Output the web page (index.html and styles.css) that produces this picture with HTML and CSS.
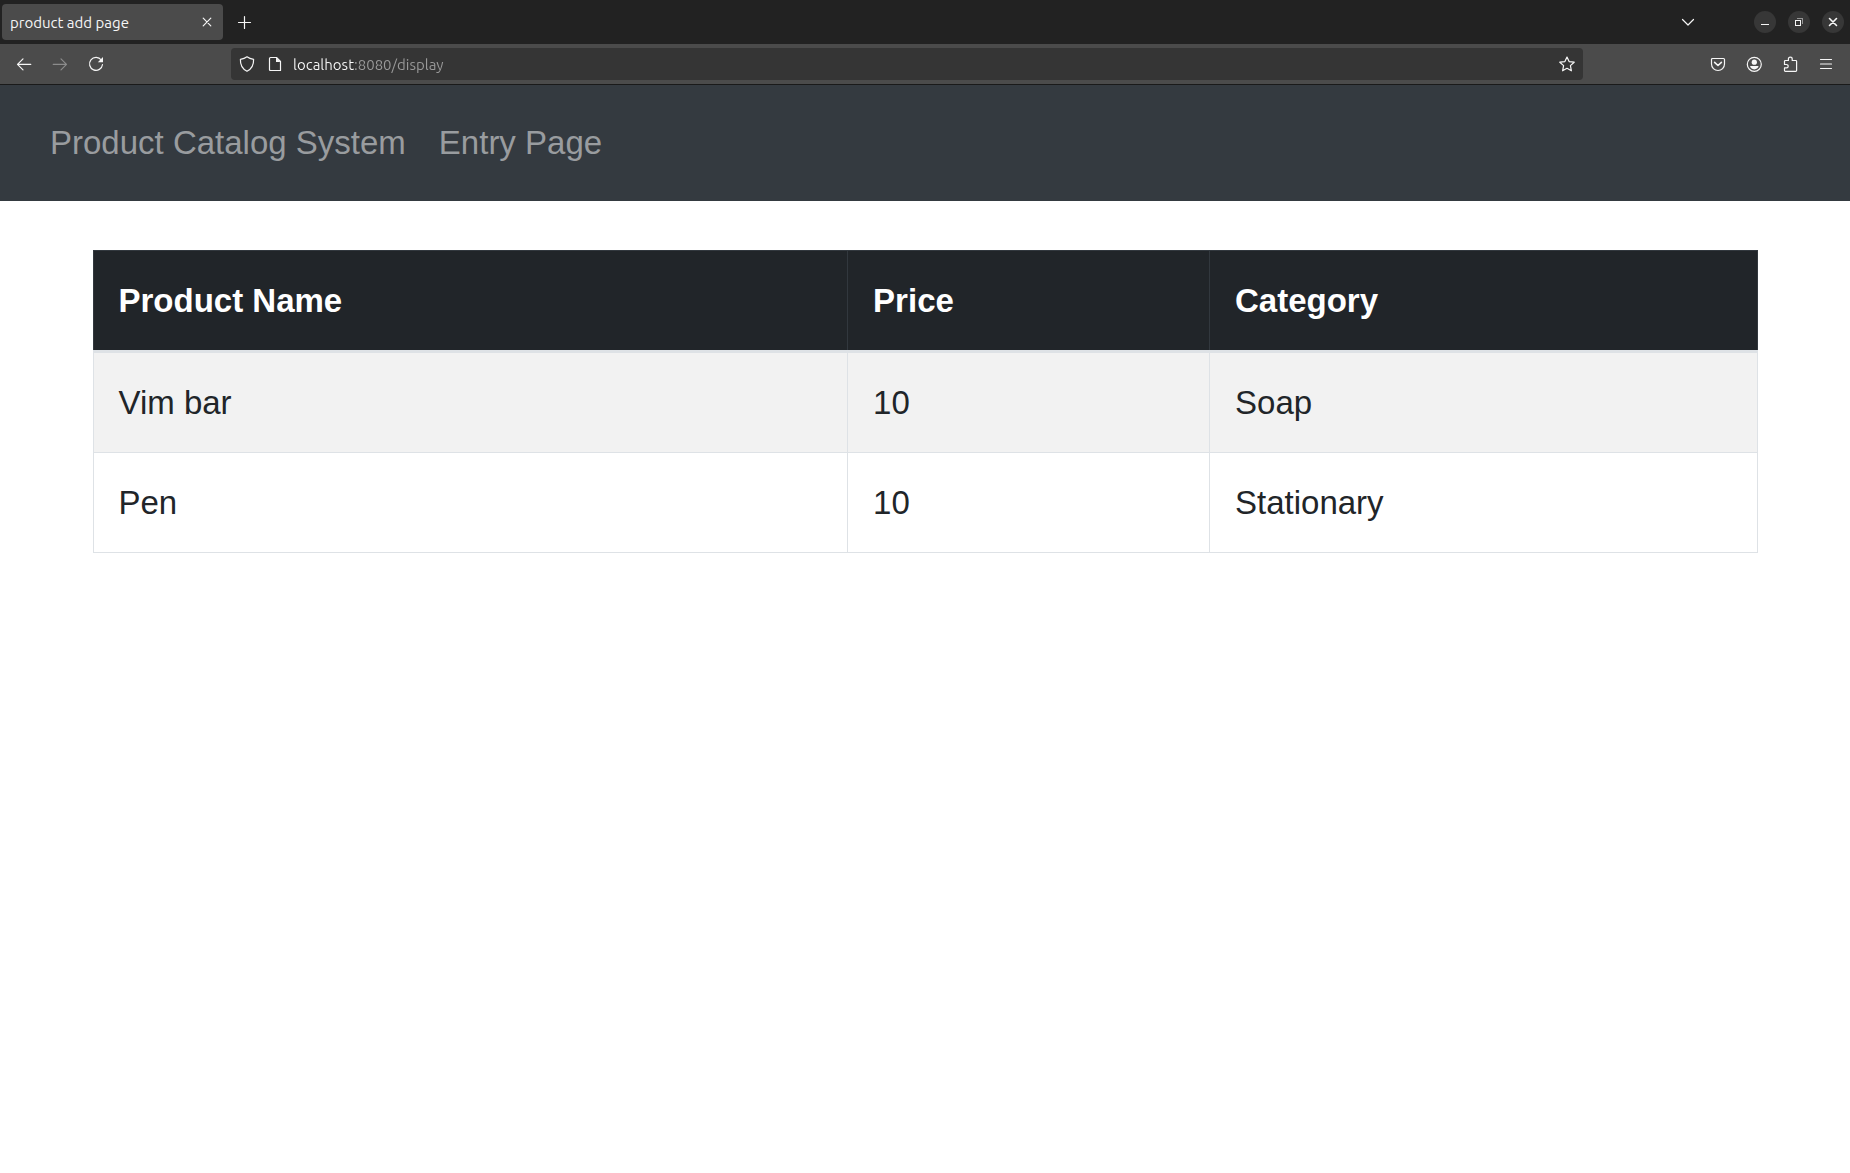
FILE: index.html
```html
<!DOCTYPE html>
<html lang="en">
<head>
<meta charset="utf-8">
<title>product add page</title>
<link rel="stylesheet" href="styles.css">
</head>
<body>
<header class="browser">
  <div class="tabstrip">
    <div class="tab">
      <span class="tab-title">product add page</span>
      <button class="tab-close" type="button" aria-label="Close tab">
        <svg class="icon" viewBox="0 0 16 16"><path d="M4.200 4.200l7.600 7.600M11.800 4.200l-7.600 7.600"/></svg>
      </button>
    </div>
    <button class="tool new-tab" type="button" aria-label="New tab">
      <svg class="icon" viewBox="0 0 16 16"><path d="M8.500 2.500v12M2.500 8.500h12"/></svg>
    </button>
    <button class="tool list-tabs" type="button" aria-label="List all tabs">
      <svg class="icon" viewBox="0 0 16 16"><path d="M2.500 5.500L8 11l5.500-5.500"/></svg>
    </button>
    <div class="window-controls">
      <button class="window-button" type="button" aria-label="Minimize">
        <svg class="icon" viewBox="0 0 16 16"><path class="crisp" d="M4 10.500h8"/></svg>
      </button>
      <button class="window-button" type="button" aria-label="Restore">
        <svg class="icon" viewBox="0 0 16 16"><path class="crisp" d="M4.500 6.500h5v5h-5z"/><path class="crisp faded" d="M6 4.500h5.500V10"/></svg>
      </button>
      <button class="window-button" type="button" aria-label="Close">
        <svg class="icon heavy" viewBox="0 0 16 16"><path d="M4.500 4.500l7 7M11.500 4.500l-7 7"/></svg>
      </button>
    </div>
  </div>
  <div class="toolbar">
    <div class="tool-group">
      <button class="tool" type="button" aria-label="Back">
        <svg class="icon" viewBox="0 0 16 16"><path d="M14.800 8.300H1.800M7 2.800L1.500 8.300 7 13.800"/></svg>
      </button>
      <button class="tool" type="button" aria-label="Forward" disabled>
        <svg class="icon" viewBox="0 0 16 16"><path d="M1.200 8.300h13M9 2.800l5.500 5.500L9 13.800"/></svg>
      </button>
      <button class="tool" type="button" aria-label="Reload">
        <svg class="icon" viewBox="0 0 16 16"><path d="M13.300 4A6.500 6.500 0 1 0 14.500 8.500"/><path class="solid" d="M15 1v5.200H9.800z"/></svg>
      </button>
    </div>
    <form class="urlbar">
      <svg class="icon" viewBox="0 0 16 16"><path d="M8 .8C6.200 2.200 3.800 3 1.400 3.300c-.2 5.400 1.600 9.600 6.600 12 5-2.400 6.800-6.600 6.600-12C12.200 3 9.800 2.200 8 .8z"/></svg>
      <svg class="icon page-icon" viewBox="0 0 16 16"><path d="M3.500 1.500h6l4 4v9h-10c-.6 0-1-.4-1-1v-11c0-.6.400-1 1-1z"/><path class="solid" d="M9 1.500v4.500h4.500z"/></svg>
      <input class="url-input" type="text" aria-label="Address" value="localhost:8080/display">
      <button class="tool star" type="button" aria-label="Bookmark this page">
        <svg class="icon" viewBox="0 0 16 16"><path d="M8 1l2.100 4.600 5.100.6-3.800 3.400 1 5.200L8 12.300l-4.400 2.500 1-5.200L.8 6.200l5.100-.6z"/></svg>
      </button>
    </form>
    <div class="tool-group">
      <button class="tool" type="button" aria-label="Save to Pocket">
        <svg class="icon" viewBox="0 0 16 16"><path d="M2.500 2.500h11c.6 0 1 .4 1 1V8a6.500 6.500 0 0 1-13 0V3.500c0-.6.400-1 1-1z"/><path class="thick" d="M4.600 6.300L8 9.500l3.400-3.200"/></svg>
      </button>
      <button class="tool" type="button" aria-label="Account">
        <svg class="icon" viewBox="0 0 16 16"><circle cx="8.300" cy="8.300" r="7"/><circle class="solid" cx="8.300" cy="6.200" r="2.600"/><path class="solid" d="M4.100 10h8.400c0 1.800-1.800 3.400-4.200 3.400S4.100 11.800 4.100 10z"/></svg>
      </button>
      <button class="tool" type="button" aria-label="Extensions">
        <svg class="icon" viewBox="0 0 16 16"><path d="M6.400 4.500V3a1.900 1.900 0 0 1 3.800 0v1.500h3.600c.5 0 .8.300.8.800v9.200c0 .5-.3.800-.8.800H3.300c-.5 0-.8-.3-.8-.8v-2.600h2a1.700 1.700 0 0 0 0-3.400h-2V5.300c0-.5.300-.8.800-.8z"/></svg>
      </button>
      <button class="tool" type="button" aria-label="Open menu">
        <svg class="icon" viewBox="0 0 16 16"><path d="M2.500 3.500h11M2.500 8h11M2.500 12.500h11"/></svg>
      </button>
    </div>
  </div>
</header>
<nav class="navbar">
  <a class="nav-link" href="#">Product Catalog System</a>
  <a class="nav-link" href="#">Entry Page</a>
</nav>
<main class="content">
  <table class="products">
    <thead>
      <tr><th class="col-name" scope="col">Product Name</th><th class="col-price" scope="col">Price</th><th scope="col">Category</th></tr>
    </thead>
    <tbody>
      <tr><td>Vim bar</td><td>10</td><td>Soap</td></tr>
      <tr><td>Pen</td><td>10</td><td>Stationary</td></tr>
    </tbody>
  </table>
</main>
</body>
</html>
```
FILE: styles.css
```css
* {
  box-sizing: border-box;
}

body {
  margin: 0;
  background: #fff;
  color: #212529;
  font-family: "Liberation Sans", Arial, sans-serif;
  font-size: 33px;
  line-height: 50px;
}

button {
  display: flex;
  align-items: center;
  justify-content: center;
  padding: 0;
  border: 0;
  background: none;
  color: inherit;
}

/* Browser chrome */
.browser {
  border-bottom: 1px solid #1a1a1a;
  background: #4b4b4b;
  color: #f6f6f6;
  font-family: Ubuntu, "Noto Sans", sans-serif;
  font-size: 15px;
  line-height: 20px;
}

.tabstrip {
  display: flex;
  align-items: center;
  height: 44px;
  padding: 0 6px 0 2px;
  background: #222;
}

.tab {
  display: flex;
  align-items: center;
  justify-content: space-between;
  width: 221px;
  height: 36px;
  padding: 0 4px 0 8px;
  border-radius: 4px;
  background: #4b4b4b;
}

.tab-title {
  padding-top: 2px;
}

.tab-close {
  width: 24px;
  height: 24px;
}

.icon {
  display: block;
  flex: none;
  width: 16px;
  height: 16px;
  fill: none;
  stroke: currentColor;
  stroke-width: 1.2;
  stroke-linecap: round;
  stroke-linejoin: round;
}

.icon .solid {
  fill: currentColor;
  stroke: none;
}

.icon .crisp {
  stroke-width: 1;
  stroke-linecap: butt;
  shape-rendering: crispEdges;
}

.icon .thick,
.heavy {
  stroke-width: 1.6;
}

.icon .faded {
  opacity: 0.5;
}

.tool {
  width: 36px;
  height: 36px;
}

.tool:disabled {
  color: #8c8c8c;
}

.new-tab {
  margin-left: 3px;
}

.list-tabs {
  margin-left: auto;
}

.window-controls {
  display: flex;
  gap: 12px;
  margin-left: 48px;
}

.window-button {
  width: 22px;
  height: 22px;
  border-radius: 50%;
  background: #373737;
}

.toolbar {
  display: flex;
  align-items: center;
  height: 40px;
  padding: 0 6px;
}

.tool-group {
  display: flex;
}

.urlbar {
  display: flex;
  align-items: center;
  flex: 1;
  height: 32px;
  margin: 0 117px;
  padding-left: 8px;
  border-radius: 4px;
  background: #353535;
}

.page-icon {
  margin-left: 12px;
}

.url-input {
  flex: 1;
  min-width: 0;
  margin-left: 10px;
  padding: 2px 0 0;
  border: 0;
  outline: 0;
  /* Host name is bright, port and path are dimmed */
  background: linear-gradient(to right, #fbfbfb 62px, #9a9a9a 62px);
  background-clip: text;
  color: transparent;
  font: inherit;
}

.star {
  width: 32px;
  height: 32px;
}

/* Page */
.navbar {
  display: flex;
  gap: 33px;
  padding: 33px 50px;
  background: #343a40;
}

.nav-link {
  color: #999c9f;
  text-decoration: none;
}

.content {
  padding: 49px 5%;
}

.products {
  width: 100%;
  border-collapse: collapse;
  table-layout: fixed;
}

.products th,
.products td {
  padding: 25px 25px 24px;
  border: 1px solid #dee2e6;
  text-align: left;
}

.products thead th {
  border-color: #32383e;
  border-bottom: 3px solid #dee2e6;
  background: #212529;
  color: #fff;
}

.products tbody tr:nth-child(odd) {
  background: #f2f2f2;
}

.col-name {
  width: 45.35%;
}

.col-price {
  width: 21.75%;
}
```
